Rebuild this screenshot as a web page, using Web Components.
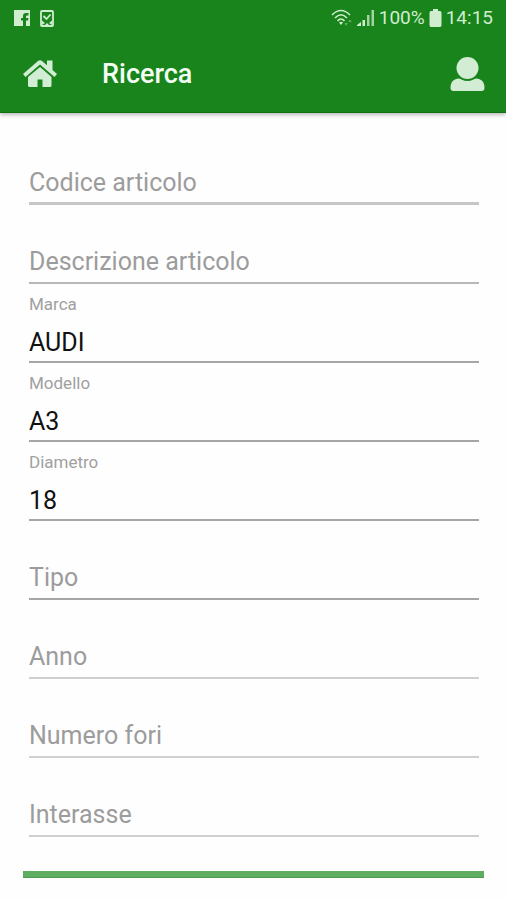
<!DOCTYPE html>
<html lang="it">
<head>
<meta charset="utf-8">
<meta name="viewport" content="width=device-width, initial-scale=1">
<title>Ricerca</title>
<style>
  body { margin: 0; background: #fefefe; font-family: Roboto, "Liberation Sans", sans-serif; color: #111; }
</style>
</head>
<body>
<search-screen></search-screen>
<script>
const define = (name, html, setup) => customElements.define(name, class extends HTMLElement {
  constructor() {
    super();
    this.attachShadow({ mode: "open" }).innerHTML = html;
  }
  connectedCallback() { if (setup) setup(this, this.shadowRoot); }
});

define("status-bar", `
  <style>
    :host { display: flex; align-items: center; justify-content: space-between; height: 36px; padding: 0 13px 0 14px; color: #d0edd0; font-size: 19px; line-height: 24px; }
    div { display: flex; align-items: center; }
    .notes { gap: 10px; }
    .state { gap: 4px; }
    svg { display: block; fill: currentColor; }
  </style>
  <div class="notes">
    <svg width="16" height="16" viewBox="0 0 16 16" aria-hidden="true"><path fill-rule="evenodd" d="M0 0H16V16H12V10.500H14L14.500 8H12V6.500Q12 5.500 13 5.500H14.500V3H12Q9 3 9 6V8H7V10.500H9V16H0Z"/></svg>
    <svg width="14" height="17" viewBox="0 0 14 17" aria-hidden="true"><rect x="1" y="1" width="12" height="15" rx="1" fill="none" stroke="currentColor" stroke-width="1.800"/><path d="M3.500 6L6.500 9L10.500 4.500" fill="none" stroke="currentColor" stroke-width="1.800"/><path d="M2 10.500L5 13L2 15Z M12 10.500L9 13L12 15Z M5 15L7 13L9 15Z"/></svg>
  </div>
  <div class="state">
    <svg width="22" height="18" viewBox="0 0 22 18" aria-hidden="true"><g fill="none" stroke="currentColor" stroke-width="1.600"><path d="M1 6Q10 -3 19 6"/><path d="M4 9Q10 2.500 16 9"/><path d="M6.500 12Q10 8 13.500 12"/></g><path d="M8 13.500Q10 12 12 13.500L10 16Z"/><path opacity=".4" d="M13.500 14H17L15 17Z M17 13L19 10.500L21 13Z"/></svg>
    <svg width="18" height="18" viewBox="0 0 18 18" aria-hidden="true"><path d="M0 17V16L4 13V17Z M5.500 11H8V17H5.500Z"/><path opacity=".75" d="M10 6H12.500V17H10Z M14.500 1H17V17H14.500Z"/></svg>
    <span>100%</span>
    <svg width="13" height="18" viewBox="0 0 13 18" aria-hidden="true"><path d="M4 0H9V2H11Q12.500 2 12.500 4V16Q12.500 18 11 18H2Q.500 18 .500 16V4Q.500 2 2 2H4Z"/></svg>
    <span>14:15</span>
  </div>`);

define("app-bar", `
  <style>
    :host { display: block; background: #19841b; border-bottom: 1px solid #107013; box-shadow: 0 2px 4px #0004; }
    nav { display: flex; align-items: center; height: 76px; padding: 0 20px; }
    h1 { flex: 1; margin: 0; padding-left: 42px; font-size: 27px; line-height: 32px; font-weight: 500; color: #f4fff4; }
    a, button { display: flex; padding: 0; border: 0; background: none; color: #d2edd4; }
    svg { display: block; fill: currentColor; }
  </style>
  <status-bar></status-bar>
  <nav>
    <a href="#" aria-label="Home"><svg width="40" height="32" viewBox="0 0 40 32"><path d="M20 9L31.500 19V27.500Q31.500 29 30 29H22.500V21.500H17.500V29H9.500Q8 29 8 27.500V19Z"/><path d="M3 16L18 3Q20 1.500 22 3L27 7.300V2.500H32.500V12L37 16L34.500 19L20 6.500L5.500 19Z"/></svg></a>
    <h1>Ricerca</h1>
    <button type="button" aria-label="Profilo"><svg width="36" height="36" viewBox="0 0 36 36"><circle cx="17.500" cy="12" r="11"/><path d="M6 23Q9 22 11.500 23.500Q17.500 26.500 23.500 23.500Q26 22 29 23Q34.500 24.500 34.500 32Q34.500 35 31.500 35H3.500Q.500 35 .500 32Q.500 24.500 6 23Z"/></svg></button>
  </nav>`);

define("text-field", `
  <style>
    :host { display: grid; grid-template-rows: 20px 1fr; row-gap: 10px; height: 79px; box-sizing: border-box; padding-top: 10px; border-bottom: var(--line, 2px solid #a6a6a6); }
    label { grid-area: 1 / 1; align-self: center; font-size: 17px; line-height: 20px; color: #a0a0a0; pointer-events: none; z-index: 1; }
    input { grid-area: 2 / 1; min-width: 0; width: 100%; height: 100%; box-sizing: border-box; border: 0; padding: 0; margin: 0; background: none; outline: 0; font: 25px/30px Roboto, "Liberation Sans", sans-serif; color: #111; }
    :host([empty]) label { grid-row: 2; padding-bottom: 3px; font-size: 25px; line-height: 30px; color: #9c9c9c; }
  </style>
  <label for="f"></label><input id="f" type="text">`,
  (host, root) => {
    const input = root.querySelector("input");
    root.querySelector("label").textContent = host.getAttribute("label");
    input.value = host.getAttribute("value") || "";
    const sync = () => host.toggleAttribute("empty", !input.value);
    input.addEventListener("input", sync);
    sync();
  });

define("search-screen", `
  <style>
    :host { display: block; }
    form { padding: 13px 27px 22px 29px; }
    .wide { --line: 3px solid #c6c6c6; }
    .soft { --line: 2px solid #b8b8b8; }
    .thin { --line: 2px solid #cfcfcf; }
    .bar { height: 7px; margin: 34px -5px 0 -6px; background: #5fad61; border-bottom: 1px solid #4a9c50; box-sizing: border-box; }
  </style>
  <app-bar></app-bar>
  <form>
    <text-field class="wide" label="Codice articolo"></text-field>
    <text-field class="soft" label="Descrizione articolo"></text-field>
    <text-field label="Marca" value="AUDI"></text-field>
    <text-field label="Modello" value="A3"></text-field>
    <text-field label="Diametro" value="18"></text-field>
    <text-field label="Tipo"></text-field>
    <text-field class="thin" label="Anno"></text-field>
    <text-field class="thin" label="Numero fori"></text-field>
    <text-field class="thin" label="Interasse"></text-field>
    <div class="bar"></div>
  </form>`);
</script>
</body>
</html>
